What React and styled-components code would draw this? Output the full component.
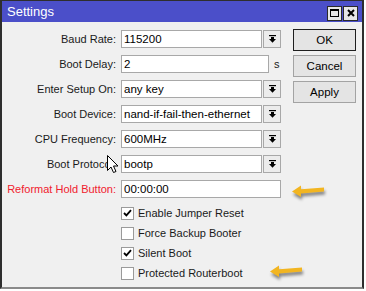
import React from 'react';
import styled, { createGlobalStyle } from 'styled-components';

const Global = createGlobalStyle`
  html, body { margin: 0; padding: 0; background: #ffffff; }
  body { font-family: "Liberation Sans", Arial, sans-serif; }
`;

const Window = styled.div`
  position: relative;
  box-sizing: border-box;
  width: 364px;
  height: 289px;
  background: #f0f0f0;
  border: 1px solid #2e2e2e;
  border-left-width: 2px;
  border-right-width: 2px;
  border-bottom: 2px solid #8a8a8a;
  overflow: hidden;
`;

const TitleBar = styled.div`
  height: 21px;
  background: #4b4fc9;
  display: flex;
  align-items: center;
  justify-content: space-between;
  padding: 0 4px 0 5px;
  color: #fff;
  font-size: 13px;
`;

const TitleButtons = styled.div`
  display: flex;
  gap: 1px;
  margin-top: 3px;
`;

const TitleBtn = styled.div`
  box-sizing: border-box;
  width: 15px;
  height: 15px;
  background: #e6e6e6;
  border: 1px solid #2a2a2a;
  display: flex;
  align-items: center;
  justify-content: center;
`;

const Body = styled.div`
  display: flex;
  align-items: flex-start;
  padding-top: 8px;
`;

const Form = styled.div`
  display: grid;
  grid-template-columns: 114px 160px;
  grid-template-rows: repeat(7, 18px) auto;
  column-gap: 5px;
  row-gap: 7px;
`;

const Label = styled.div`
  font-size: 11px;
  line-height: 18px;
  text-align: right;
  white-space: nowrap;
  color: ${p => (p.$alert ? '#f0202e' : '#1a1a1a')};
`;

const Field = styled.div`
  display: flex;
  align-items: center;
  gap: ${p => (p.$unit ? '5px' : '1px')};
`;

const Input = styled.div`
  box-sizing: border-box;
  width: ${p => p.$w}px;
  height: 18px;
  background: #fff;
  border: 1px solid #a8a8a8;
  padding-left: 2px;
  font-size: 11.5px;
  line-height: 16px;
  color: #000;
  white-space: nowrap;
  overflow: hidden;
`;

const DropBtn = styled.div`
  box-sizing: border-box;
  width: 18px;
  height: 18px;
  background: #ececec;
  border: 1px solid #a8a8a8;
  display: flex;
  align-items: center;
  justify-content: center;
`;

const Unit = styled.span`
  font-size: 11px;
  color: #1a1a1a;
`;

const CheckList = styled.div`
  grid-column: 2;
  display: flex;
  flex-direction: column;
  margin-top: -2px;
`;

const CheckRow = styled.div`
  display: flex;
  align-items: center;
  gap: 4px;
  height: 20px;
  flex-shrink: 0;
  font-size: 11px;
  color: #1a1a1a;
`;

const Box = styled.div`
  box-sizing: border-box;
  width: 13px;
  height: 13px;
  background: #fff;
  border: 1px solid #9a9a9a;
  display: flex;
  align-items: center;
  justify-content: center;
`;

const Buttons = styled.div`
  display: flex;
  flex-direction: column;
  gap: 4px;
  margin-left: 12px;
  margin-top: -1px;
`;

const Button = styled.div`
  box-sizing: border-box;
  width: 63px;
  height: 22px;
  background: #e4e4e4;
  border: 1px solid ${p => (p.$default ? '#1f1f1f' : '#a3a3a3')};
  font-size: 11.5px;
  display: flex;
  align-items: center;
  justify-content: center;
  color: #000;
`;

const Overlay = styled.svg`
  position: absolute;
  left: ${p => p.$x}px;
  top: ${p => p.$y}px;
  overflow: visible;
`;

const DropIcon = () => (
  <svg width="7" height="8" viewBox="0 0 7 8">
    <rect x="0" y="0" width="7" height="1.2" fill="#000" />
    <rect x="2" y="2" width="3" height="2" fill="#000" />
    <polygon points="0,4 7,4 3.5,7.8" fill="#000" />
  </svg>
);

const Check = ({ on }) => (
  <Box>
    {on && (
      <svg width="9" height="8" viewBox="0 0 9 8">
        <path d="M1 4 L3.4 6.4 L8 1.2" fill="none" stroke="#000" strokeWidth="1.8" />
      </svg>
    )}
  </Box>
);

const Arrow = ({ x, y }) => (
  <Overlay $x={x} $y={y} width="40" height="20" viewBox="0 0 40 20"
    style={{ filter: 'drop-shadow(1px 3px 1.5px rgba(0,0,0,0.45))' }}>
    <polygon points="3,10.5 12,4.5 12,8.2 35,6.6 35,10.6 12,12.6 12,16" fill="#f2b521" />
  </Overlay>
);

const fields = [
  { label: 'Baud Rate:', value: '115200', drop: true },
  { label: 'Boot Delay:', value: '2', unit: 's' },
  { label: 'Enter Setup On:', value: 'any key', drop: true },
  { label: 'Boot Device:', value: 'nand-if-fail-then-ethernet', drop: true },
  { label: 'CPU Frequency:', value: '600MHz', drop: true },
  { label: 'Boot Protocol:', value: 'bootp', drop: true },
  { label: 'Reformat Hold Button:', value: '00:00:00', alert: true },
];

const checks = [
  { label: 'Enable Jumper Reset', on: true },
  { label: 'Force Backup Booter', on: false },
  { label: 'Silent Boot', on: true },
  { label: 'Protected Routerboot', on: false },
];

export default function App() {
  return (
    <>
      <Global />
      <Window>
        <TitleBar>
          <span>Settings</span>
          <TitleButtons>
            <TitleBtn>
              <svg width="9" height="8" viewBox="0 0 9 8">
                <rect x="0.5" y="0.5" width="8" height="7" fill="none" stroke="#000" />
                <rect x="0" y="0" width="9" height="2" fill="#000" />
              </svg>
            </TitleBtn>
            <TitleBtn>
              <svg width="8" height="8" viewBox="0 0 8 8">
                <path d="M1 1 L7 7 M7 1 L1 7" stroke="#000" strokeWidth="2" />
              </svg>
            </TitleBtn>
          </TitleButtons>
        </TitleBar>
        <Body>
          <Form>
            {fields.map(f => (
              <React.Fragment key={f.label}>
                <Label $alert={f.alert}>{f.label}</Label>
                <Field $unit={!!f.unit}>
                  <Input $w={f.drop ? 141 : f.unit ? 148 : 160}>{f.value}</Input>
                  {f.drop && (
                    <DropBtn>
                      <DropIcon />
                    </DropBtn>
                  )}
                  {f.unit && <Unit>{f.unit}</Unit>}
                </Field>
              </React.Fragment>
            ))}
            <CheckList>
              {checks.map(c => (
                <CheckRow key={c.label}>
                  <Check on={c.on} />
                  {c.label}
                </CheckRow>
              ))}
            </CheckList>
          </Form>
          <Buttons>
            <Button $default>OK</Button>
            <Button>Cancel</Button>
            <Button>Apply</Button>
          </Buttons>
        </Body>
        <Overlay $x={102} $y={152} width="16" height="22" viewBox="0 0 16 22">
          <rect x="3" y="3" width="13" height="17" fill="#f0f0f0" />
          <path d="M3.5 2.5 L3.5 17.5 L7 14 L9.5 19.5 L12 18.5 L9.5 13 L14 13 Z"
            fill="#fff" stroke="#000" strokeWidth="1" strokeLinejoin="round" />
        </Overlay>
        <Arrow x={287} y={180} />
        <Arrow x={265} y={260} />
      </Window>
    </>
  );
}
